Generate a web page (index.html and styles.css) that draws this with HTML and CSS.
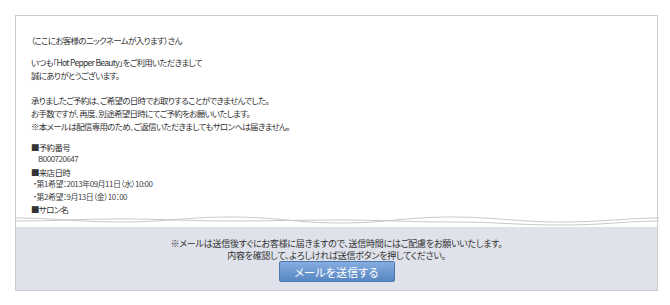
FILE: index.html
```html
<!DOCTYPE html>
<html lang="ja">
<head>
	<meta charset="UTF-8">
	<title>メール送信確認</title>
	<link rel="stylesheet" href="styles.css">
</head>
<body>
	<div class="mail">
		<div class="mail-body">
			<p class="name">（ここにお客様のニックネームが入ります）さん</p>
			<p class="greet">いつも「Hot Pepper Beauty」をご利用いただきまして<br>誠にありがとうございます。</p>
			<p class="notice">承りましたご予約は、ご希望の日時でお取りすることができませんでした。<br>お手数ですが、再度、別途希望日時にてご予約をお願いいたします。<br>※本メールは配信専用のため、ご返信いただきましてもサロンへは届きません。</p>
			<ul class="info">
				<li>■予約番号</li>
				<li class="sub">B000720647</li>
				<li>■来店日時</li>
				<li class="sub dot">・第1希望：2013年09月11日（水）10:00</li>
				<li class="sub dot">・第2希望：9月13日（金）10：00</li>
				<li>■サロン名</li>
			</ul>
		</div>
		<svg class="tear" width="643" height="12" viewBox="0 0 643 12">
			<path d="M0 3 C40 3 60 7 105 7 C150 7 170 2 215 2 C260 2 280 8 325 8 C370 8 390 2 435 2 C480 2 500 7 545 7 C590 7 610 3 643 3" fill="none" stroke="#c8c8c8" stroke-width="1"/>
			<path d="M0 6 C40 6 60 4 105 4 C150 4 170 6 215 6 C260 6 280 5 325 5 C370 5 390 7 435 7 C480 7 500 10 545 10 C590 10 610 6 643 6" fill="none" stroke="#c8c8c8" stroke-width="1"/>
		</svg>
		<div class="mail-foot">
			<p>※メールは送信後すぐにお客様に届きますので、送信時間にはご配慮をお願いいたします。<br>内容を確認して、よろしければ送信ボタンを押してください。</p>
			<button class="send">メールを送信する</button>
		</div>
	</div>
</body>
</html>
```

FILE: styles.css
```css
* { margin: 0; padding: 0; box-sizing: border-box; }
body {
	background: #fff;
	color: #333;
	font-family: "Noto Sans CJK JP", "Noto Sans", sans-serif;
	font-feature-settings: "palt";
}
.mail {
	width: 643px;
	margin: 15px 0 0 15px;
	border: 1px solid #ccc;
}
.mail-body {
	padding: 18px 15px 0;
	font-size: 8.5px;
	line-height: 13px;
	letter-spacing: -.7px;
}
.mail-body .greet {
	margin-top: 9px;
}
.mail-body .notice {
	margin-top: 12px;
}
.mail-body .info {
	list-style: none;
	margin-top: 8px;
	line-height: 12.4px;
	font-weight: normal;
}
.mail-body .info .sub {
	font-size: 8px;
	padding-left: 7px;
	letter-spacing: -.5px;
	color: #444;
}
.mail-body .info .dot {
	padding-left: 2px;
}
.tear {
	display: block;
}
.mail-foot {
	background: #dfe2ea;
	text-align: center;
	padding: 11px 0 8px;
	font-size: 9px;
	line-height: 11.5px;
	letter-spacing: -.25px;
}
.mail-foot .send {
	display: block;
	margin: 0 auto;
	width: 116px;
	height: 21px;
	border: 1px solid #4d79b3;
	border-radius: 2px;
	background: linear-gradient(#86ade0, #5786c2);
	color: #fff;
	font: 11px "Noto Sans CJK JP", sans-serif;
	font-feature-settings: "palt";
	letter-spacing: .2px;
}
```
